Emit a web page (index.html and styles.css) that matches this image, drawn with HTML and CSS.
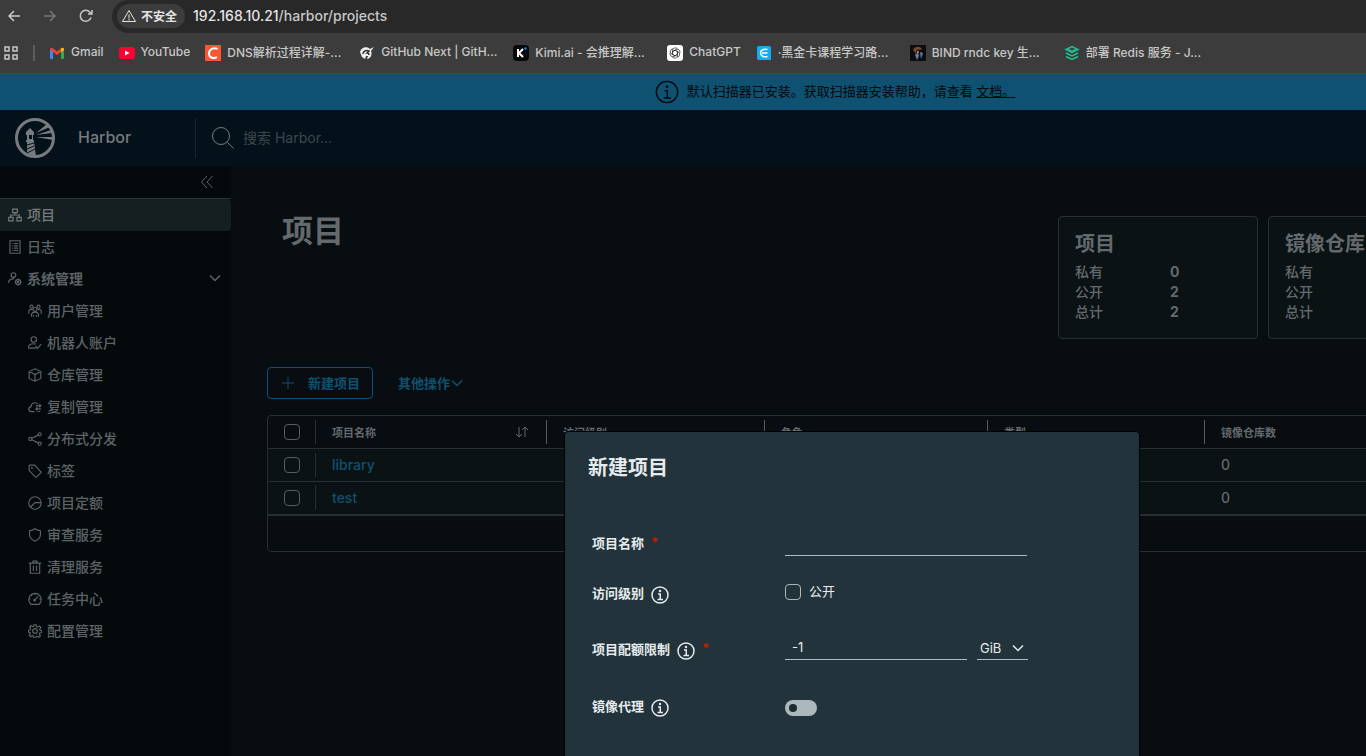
FILE: index.html
```html
<!DOCTYPE html>
<html lang="zh-CN">
<head>
    <meta charset="UTF-8">
    <meta name="viewport" content="width=device-width, initial-scale=1.0">
    <title>Harbor</title>
    <link rel="stylesheet" href="styles.css">
</head>
<body>
    <svg class="sprite" aria-hidden="true">
        <symbol id="i-info" viewBox="0 0 36 36"><circle cx="18" cy="18" r="16"/><circle cx="18" cy="10" r="1" fill="currentColor"/><path d="M14 16h4.500v11M13 27h11"/></symbol>
        <symbol id="i-chevron" viewBox="0 0 14 14"><path d="M2 4.500l5 5 5-5"/></symbol>
        <symbol id="i-projects" viewBox="0 0 36 36"><path d="M12 3h12v9H12zM2 24h11v9H2zM23 24h11v9H23zM18 12v6M7 24v-6h22v6"/></symbol>
        <symbol id="i-logs" viewBox="0 0 36 36"><path d="M5 2h26v32H5zM10 9h2M10 15h2M10 21h2M10 27h2M15 9h11M15 15h11M15 21h11M15 27h11"/></symbol>
        <symbol id="i-admin" viewBox="0 0 36 36"><circle cx="14" cy="8" r="6"/><path d="M2 28v-5c3-5 8-6 14-6"/><circle cx="26" cy="26" r="6.500"/><circle cx="26" cy="26" r="2"/><path d="M26 17v3M26 32v3M17 26h3M32 26h3M20 20l2 2M30 30l2 2M32 20l-2 2M22 30l-2 2"/></symbol>
        <symbol id="i-users" viewBox="0 0 36 36"><circle cx="18" cy="14" r="5"/><circle cx="9" cy="7" r="4"/><circle cx="27" cy="7" r="4"/><path d="M9 33v-7c2-4 5-5 9-5s7 1 9 5v7M14 33v-5M22 33v-5M2 25v-8c2-3 5-4 9-3M34 25v-8c-2-3-5-4-9-3"/></symbol>
        <symbol id="i-robot" viewBox="0 0 36 36"><circle cx="15" cy="9" r="7"/><path d="M20 31H2v-6c5-6 11-6 18-4M19 26l5 6 10-11"/></symbol>
        <symbol id="i-cube" viewBox="0 0 36 36"><path d="M18 2l15 7v18l-15 7-15-7V9zM3 9l15 8 15-8M18 17v17"/></symbol>
        <symbol id="i-cloud" viewBox="0 0 36 36"><path d="M17 30H9c-9 0-9-12-1-13C8 7 20 4 25 11M31 29c-2 1-4 1-6 1M20 15h13M29 11l4 4-4 4M33 23H20M24 19l-4 4 4 4"/></symbol>
        <symbol id="i-share" viewBox="0 0 36 36"><circle cx="6" cy="18" r="4"/><circle cx="30" cy="6" r="4"/><circle cx="30" cy="30" r="4"/><path d="M10 16l16-8M10 20l16 8"/></symbol>
        <symbol id="i-tag" viewBox="0 0 36 36"><path d="M3 5l2-2h12l16 17c1 1 1 2 0 3L22 33c-1 1-2 1-3 0L3 17z"/><circle cx="10" cy="10" r="1"/></symbol>
        <symbol id="i-quota" viewBox="0 0 36 36"><circle cx="18" cy="18" r="16"/><path d="M6 29l12-12h16"/></symbol>
        <symbol id="i-shield" viewBox="0 0 36 36"><path d="M18 2c4 3 9 5 14 5v11c0 7-6 12-14 16C10 30 4 25 4 18V7c5 0 10-2 14-5z"/></symbol>
        <symbol id="i-trash" viewBox="0 0 36 36"><path d="M2 8h32M6 8v26h24V8M13 8V3h10v5M14 14v14M22 14v14"/></symbol>
        <symbol id="i-gauge" viewBox="0 0 36 36"><path d="M8 32a16 16 0 1 1 20 0zM17 21l9-10M18 3v4M3 18h4M29 18h4M8 8l2 2"/><circle cx="17" cy="21" r="2"/></symbol>
        <symbol id="i-cog" viewBox="0 0 36 36"><path d="M15 2h6l1 5 3 1 4-3 4 4-3 5 1 2 4 1v5l-5 1-1 3 3 4-4 4-4-3-3 1-1 4h-5l-1-5-3-1-4 3-4-4 3-4-1-3-4-1v-5l5-1 1-3-3-4 4-4 4 3 3-1z"/><circle cx="18" cy="18" r="6"/></symbol>
    </svg>

    <!-- Browser bar -->
    <div class="browser">
        <div class="toolbar">
            <button class="nav-btn" aria-label="Back"><svg viewBox="0 0 16 16"><path d="M14 8H3M8 3L3 8l5 5"/></svg></button>
            <button class="nav-btn disabled" aria-label="Forward"><svg viewBox="0 0 16 16"><path d="M2 8h11M8 3l5 5-5 5"/></svg></button>
            <button class="nav-btn" aria-label="Reload"><svg viewBox="0 0 16 16"><path d="M13 9.500A5.500 5.500 0 1 1 12 4.200l1.500 1.500M14 2v4h-4"/></svg></button>
            <div class="address">
                <button class="insecure"><svg viewBox="0 0 16 16"><path d="M8 2.500L14.500 13.500h-13zM8 6.500v4M8 11v1.500"/></svg>不安全</button>
                <span class="url"><b>192.168.10.21</b>/harbor/projects</span>
            </div>
        </div>
        <nav class="bookmarks">
            <button class="apps" aria-label="Apps"><svg viewBox="0 0 16 16"><path d="M2 2h4v4H2zM10 2h4v4h-4zM2 10h4v4H2zM10 10h4v4h-4z"/></svg></button>
            <span class="divider"></span>
            <a href="#"><svg viewBox="0 0 16 16"><path fill="#4285f4" d="M1 4l3 2.500V14H2a1 1 0 0 1-1-1z"/><path fill="#34a853" d="M15 4l-3 2.500V14h2a1 1 0 0 0 1-1z"/><path fill="#ea4335" d="M1 4.500C1 2.500 3 2.500 4 3.300L8 6.500l4-3.200V7l-4 3-4-3z"/><path fill="#fbbc04" d="M12 3.300c1-.8 3-.8 3 1.200v.5l-3 2.300z"/></svg>Gmail</a>
            <a href="#"><svg viewBox="0 0 16 16"><rect y="2" width="16" height="12" rx="3" fill="#f03"/><path d="M6 5.500v5l4.500-2.500z" fill="#fff"/></svg>YouTube</a>
            <a href="#" class="long"><svg viewBox="0 0 16 16"><rect width="16" height="16" fill="#fc5531"/><path d="M12.500 4.200C9 2 4 4 4 8.500c0 4 4 5.500 8 3.700" fill="none" stroke="#fff" stroke-width="2"/></svg>DNS解析过程详解-...</a>
            <a href="#" class="long"><svg viewBox="0 0 16 16"><path d="M1 7c1-5 7-6 10-3l4-2-3 4c2 5-2 8-4 8l1-3H7l-1 3-3-2z" fill="#eee"/><path d="M4 9c0-3 3-4 6-3L8 8c2 0 2 1 2 2" fill="none" stroke="#333" stroke-width="1.500"/></svg>GitHub Next | GitH...</a>
            <a href="#" class="long"><svg viewBox="0 0 16 16"><rect width="16" height="16" rx="4" fill="#080808"/><path d="M5 4v8M10 4L6 8l4 4" fill="none" stroke="#fff" stroke-width="2"/><circle cx="12.500" cy="3.500" r="1.200" fill="#1783ff"/></svg>Kimi.ai - 会推理解...</a>
            <a href="#"><svg viewBox="0 0 16 16"><rect width="16" height="16" rx="3" fill="#fff"/><g fill="none" stroke="#333" stroke-width=".8"><path id="petal" d="M8 5.200l2.500 1.500v3.500c0 3-4 4-5 1.500"/><use href="#petal" transform="rotate(60 8 8)"/><use href="#petal" transform="rotate(120 8 8)"/><use href="#petal" transform="rotate(180 8 8)"/><use href="#petal" transform="rotate(240 8 8)"/><use href="#petal" transform="rotate(300 8 8)"/></g></svg>ChatGPT</a>
            <a href="#" class="long"><svg viewBox="0 0 16 16"><path d="M3 1h10a2 2 0 0 1 2 2v12H3a2 2 0 0 1-2-2V3a2 2 0 0 1 2-2z" fill="#12adee"/><path d="M11.500 4.500C8 3.500 4.500 5 4.500 8s3.500 4.500 7 3.500M6 8h5.500" fill="none" stroke="#fff" stroke-width="1.500"/></svg>·黑金卡课程学习路...</a>
            <a href="#" class="long"><svg viewBox="0 0 16 16"><rect width="16" height="16" fill="#0d0d10"/><path d="M3 5c2-4 7-4 9-1l-2 1c-3-1-4 1-4 4z" fill="#6a4a2d"/><path d="M5 10l3-3 1 4-2 4zM10 7l3 1-2 6z" fill="#657da5"/><circle cx="8" cy="7" r="1" fill="#d99a54"/></svg>BIND rndc key 生...</a>
            <a href="#" class="long"><svg viewBox="0 0 16 16"><g fill="none" stroke="#1ac293" stroke-width="1.500"><path d="M2 4.500L8 1.500l6 3-6 3z"/><path d="M4 4.500l4 2 4-2M2 8l6 3 6-3M2 11.500l6 3 6-3"/></g></svg>部署 Redis 服务 - J...</a>
        </nav>
    </div>

    <div class="app">
        <div class="banner">
            <svg class="icon"><use href="#i-info"/></svg>
            <span>默认扫描器已安装。获取扫描器安装帮助，请查看 <a href="#">文档。</a></span>
        </div>

        <header class="header">
            <a href="#" class="brand">
                <svg viewBox="0 0 42 42">
                    <circle cx="21" cy="21" r="18.500" fill="none" stroke="currentColor" stroke-width="3"/>
                    <path d="M12 15l4-4 4 4v3h-1v5h1v2l2 14-9-2V25h-1v-2h1v-5h-1zM15 18v4h3v-4z" fill="currentColor" fill-rule="evenodd"/>
                    <path d="M22 16l11-9 3 3zM22 18l15-5 1 3zM22 20l17 0 0 3z" fill="currentColor"/>
                    <path d="M13 28l7-2M13 32l7-3M13 36l8-4" stroke="#03111b" stroke-width="1"/>
                </svg>
                <span>Harbor</span>
            </a>
            <label class="search">
                <svg viewBox="0 0 24 24"><circle cx="10" cy="10" r="8.500"/><path d="M16.500 16.500l6 6"/></svg>
                <input type="search" placeholder="搜索 Harbor..." aria-label="搜索 Harbor">
            </label>
        </header>

        <div class="main">
            <aside class="sidebar">
                <button class="collapse" aria-label="收起"><svg viewBox="0 0 14 14"><path d="M7 1L1.500 7 7 13M12.500 1L7 7l5.500 6"/></svg></button>
                <nav>
                    <a href="#" class="item active"><svg class="icon"><use href="#i-projects"/></svg>项目</a>
                    <a href="#" class="item"><svg class="icon"><use href="#i-logs"/></svg>日志</a>
                    <button class="item group"><svg class="icon"><use href="#i-admin"/></svg>系统管理<svg class="chevron"><use href="#i-chevron"/></svg></button>
                    <a href="#" class="item sub"><svg class="icon"><use href="#i-users"/></svg>用户管理</a>
                    <a href="#" class="item sub"><svg class="icon"><use href="#i-robot"/></svg>机器人账户</a>
                    <a href="#" class="item sub"><svg class="icon"><use href="#i-cube"/></svg>仓库管理</a>
                    <a href="#" class="item sub"><svg class="icon"><use href="#i-cloud"/></svg>复制管理</a>
                    <a href="#" class="item sub"><svg class="icon"><use href="#i-share"/></svg>分布式分发</a>
                    <a href="#" class="item sub"><svg class="icon"><use href="#i-tag"/></svg>标签</a>
                    <a href="#" class="item sub"><svg class="icon"><use href="#i-quota"/></svg>项目定额</a>
                    <a href="#" class="item sub"><svg class="icon"><use href="#i-shield"/></svg>审查服务</a>
                    <a href="#" class="item sub"><svg class="icon"><use href="#i-trash"/></svg>清理服务</a>
                    <a href="#" class="item sub"><svg class="icon"><use href="#i-gauge"/></svg>任务中心</a>
                    <a href="#" class="item sub"><svg class="icon"><use href="#i-cog"/></svg>配置管理</a>
                </nav>
            </aside>

            <main class="content">
                <div class="top">
                    <h1>项目</h1>
                    <div class="cards">
                        <section class="card">
                            <h2>项目</h2>
                            <dl><dt>私有</dt><dd>0</dd><dt>公开</dt><dd>2</dd><dt>总计</dt><dd>2</dd></dl>
                        </section>
                        <section class="card">
                            <h2>镜像仓库</h2>
                            <dl><dt>私有</dt><dd></dd><dt>公开</dt><dd></dd><dt>总计</dt><dd></dd></dl>
                        </section>
                    </div>
                </div>

                <div class="actions">
                    <button class="btn outline"><svg viewBox="0 0 14 14"><path d="M7 1v12M1 7h12"/></svg>新建项目</button>
                    <button class="btn">其他操作<svg class="chevron"><use href="#i-chevron"/></svg></button>
                </div>

                <div class="datagrid">
                    <table>
                        <colgroup><col class="c-check"><col class="c-name"><col class="c-access"><col class="c-role"><col class="c-type"><col></colgroup>
                        <thead>
                            <tr>
                                <th><input type="checkbox" class="check" aria-label="全选"></th>
                                <th><div class="cell dim">项目名称<svg class="sort" viewBox="0 0 14 12"><path d="M4 1v10M1 8l3 3 3-3M10 11V1M7 4l3-3 3 3"/></svg></div></th>
                                <th><div class="cell">访问级别</div></th>
                                <th><div class="cell">角色</div></th>
                                <th><div class="cell">类型</div></th>
                                <th><div class="cell">镜像仓库数</div></th>
                            </tr>
                        </thead>
                        <tbody>
                            <tr>
                                <td><input type="checkbox" class="check" aria-label="library"></td>
                                <td><div class="cell dim"><a href="#">library</a></div></td>
                                <td></td><td></td><td></td>
                                <td><div class="cell plain">0</div></td>
                            </tr>
                            <tr>
                                <td><input type="checkbox" class="check" aria-label="test"></td>
                                <td><div class="cell dim"><a href="#">test</a></div></td>
                                <td></td><td></td><td></td>
                                <td><div class="cell plain">0</div></td>
                            </tr>
                        </tbody>
                    </table>
                    <div class="datagrid-footer"></div>
                </div>
            </main>
        </div>

        <!-- New project dialog -->
        <div class="modal" role="dialog" aria-labelledby="modal-title">
            <h3 id="modal-title">新建项目</h3>
            <form>
                <div class="form-row first">
                    <label for="name">项目名称<span class="required">*</span></label>
                    <input type="text" id="name" class="text wide">
                </div>
                <div class="form-row">
                    <label for="public">访问级别<svg class="icon"><use href="#i-info"/></svg></label>
                    <input type="checkbox" id="public" class="check">
                    <label for="public" class="option">公开</label>
                </div>
                <div class="form-row">
                    <label for="quota">项目配额限制<svg class="icon"><use href="#i-info"/></svg><span class="required">*</span></label>
                    <input type="text" id="quota" class="text" value="-1">
                    <div class="select">
                        <select aria-label="单位"><option>GiB</option></select>
                        <svg class="chevron"><use href="#i-chevron"/></svg>
                    </div>
                </div>
                <div class="form-row last">
                    <label for="proxy">镜像代理<svg class="icon"><use href="#i-info"/></svg></label>
                    <input type="checkbox" id="proxy" class="switch" role="switch">
                </div>
            </form>
        </div>
    </div>
</body>
</html>
```

FILE: styles.css
```css
* {
    box-sizing: border-box;
}
body {
    margin: 0;
    height: 100vh;
    overflow: hidden;
    display: flex;
    flex-direction: column;
    background-color: #070d10;
    color: #63696c;
    font-family: Inter, "Noto Sans CJK SC", sans-serif;
    font-size: 14px;
}
button, input, select {
    font-family: inherit;
    color: inherit;
    background: none;
    border: none;
    padding: 0;
    margin: 0;
}
a {
    color: inherit;
    text-decoration: none;
}
h1, h2, h3, dl, dd {
    margin: 0;
}
svg {
    flex: none;
    fill: none;
    stroke: currentColor;
}
.sprite {
    display: none;
}
.icon {
    stroke-width: 2;
}
.chevron {
    width: 14px;
    height: 14px;
    stroke-width: 1.5;
}

/* Browser bar */
.browser {
    flex: none;
    background-color: #3c3c3c;
    border-bottom: 1px solid #4a4744;
    color: #c7c7c7;
}
.toolbar {
    display: flex;
    align-items: center;
    height: 33px;
    padding: 0 0 2px 6px;
}
.nav-btn {
    width: 16px;
    height: 16px;
    margin-right: 20px;
}
.nav-btn svg {
    display: block;
    width: 16px;
    height: 16px;
    stroke-width: 1.5;
}
.nav-btn.disabled {
    color: #777;
}
.address {
    flex: 1;
    display: flex;
    align-items: center;
    height: 33px;
    margin: 2px 0 0 -2px;
    padding: 0 0 2px 5px;
    background-color: #282828;
    border-radius: 17px 0 0 17px;
}
.insecure {
    display: flex;
    align-items: center;
    gap: 4px;
    height: 24px;
    padding: 0 8px 0 4px;
    border-radius: 12px;
    background-color: #3c3c3c;
    color: #e3e3e3;
    font-size: 12px;
    font-weight: 700;
}
.insecure svg {
    width: 16px;
    height: 16px;
}
.url {
    margin-left: 8px;
    font-weight: 500;
}
.url b {
    color: #e3e3e3;
    font-weight: 500;
}
.bookmarks {
    display: flex;
    align-items: center;
    height: 39px;
    margin-bottom: 1px;
    padding-left: 3px;
    font-size: 12px;
    font-weight: 500;
}
.apps, .apps svg {
    display: block;
    width: 16px;
    height: 16px;
    stroke-width: 1.5;
}
.divider {
    width: 2px;
    height: 16px;
    margin: 0 14px;
    background-color: #5c5c5c;
}
.bookmarks a {
    display: flex;
    align-items: center;
    gap: 6px;
    margin-right: 15px;
    padding-bottom: 2px;
    white-space: nowrap;
}
.bookmarks a svg {
    width: 16px;
    height: 16px;
    margin-top: 2px;
    stroke: none;
}
.bookmarks .long {
    width: 139px;
}

/* Harbor */
.app {
    flex: 1;
    position: relative;
    display: flex;
    flex-direction: column;
    width: calc(100% + 338px);
    min-height: 0;
}
.banner {
    display: flex;
    align-items: center;
    justify-content: center;
    gap: 8px;
    height: 36px;
    padding-right: 34px;
    background-color: #0f5170;
    color: #02080b;
    font-size: 13px;
}
.banner span {
    padding-bottom: 3px;
}
.banner .icon {
    width: 24px;
    height: 24px;
}
.banner a {
    text-decoration: underline;
}
.header {
    display: flex;
    align-items: center;
    height: 56px;
    background-color: #03111b;
    color: #777b7f;
}
.brand {
    display: flex;
    align-items: center;
    gap: 22px;
    width: 196px;
    height: 40px;
    padding-left: 14px;
    border-right: 1px solid #17242d;
    font-size: 16px;
    font-weight: 500;
}
.brand span {
    padding-bottom: 2px;
}
.brand svg {
    width: 42px;
    height: 42px;
    stroke: none;
}
.search {
    display: flex;
    align-items: center;
    gap: 8px;
    margin-left: 15px;
}
.search svg {
    width: 24px;
    height: 24px;
}
.search input {
    width: 200px;
    padding-bottom: 2px;
    font-size: 14px;
    outline: none;
}
.search input::placeholder {
    color: #3d474d;
}
.main {
    flex: 1;
    display: flex;
    min-height: 0;
}
.sidebar {
    flex: none;
    width: 231px;
    background-color: #04090c;
    color: #5d6366;
}
.collapse {
    display: flex;
    align-items: center;
    justify-content: flex-end;
    width: 100%;
    height: 33px;
    padding-right: 17px;
    border-bottom: 1px solid #2b3437;
}
.collapse svg {
    width: 14px;
    height: 14px;
}
.item {
    display: flex;
    align-items: center;
    gap: 5px;
    width: 100%;
    height: 32px;
    padding: 0 9px 2px 8px;
    font-size: 14px;
    font-weight: 500;
    text-align: left;
}
.item.active {
    background-color: #151e21;
    border-radius: 0 4px 4px 0;
    color: #767b7d;
}
.item.group {
    font-weight: 700;
}
.item.group .chevron {
    margin-left: auto;
}
.item.sub {
    padding-left: 28px;
}
.item .icon {
    width: 14px;
    height: 14px;
    margin-top: 2px;
    stroke-width: 3;
}
.content {
    flex: 1;
    padding: 50px 26px 0 36px;
}
.top {
    display: flex;
    justify-content: space-between;
    height: 151px;
}
.top h1 {
    padding-left: 15px;
    font-size: 31px;
    font-weight: 700;
    line-height: 30px;
}
.cards {
    display: grid;
    grid-template-columns: repeat(3, 200px);
    gap: 10px;
    align-items: start;
}
.card {
    padding: 13px 16px 16px;
    background-color: #0a1214;
    border: 1px solid #282f32;
    border-radius: 4px;
}
.card h2 {
    margin-bottom: 4px;
    font-size: 20px;
    font-weight: 700;
    line-height: 28px;
}
.card dl {
    display: grid;
    grid-template-columns: 95px 1fr;
    font-weight: 500;
    line-height: 20px;
}
.card dd {
    font-weight: 700;
}
.actions {
    display: flex;
    gap: 15px;
    margin-bottom: 16px;
}
.btn {
    display: flex;
    align-items: center;
    height: 32px;
    padding: 0 9px 2px;
    color: #0f5170;
    font-size: 13px;
    font-weight: 700;
    border: 1px solid transparent;
    border-radius: 4px;
}
.btn.outline {
    gap: 13px;
    padding: 0 12px 2px 13px;
    border-color: #0f5170;
}
.btn svg {
    width: 14px;
    height: 14px;
    margin-top: 2px;
}
.datagrid {
    border: 1px solid #282f32;
    border-radius: 4px;
}
.datagrid table {
    width: 100%;
    table-layout: fixed;
    border-collapse: separate;
    border-spacing: 0;
}
.c-check {
    width: 47px;
}
.c-name {
    width: 231px;
}
.c-access {
    width: 218px;
}
.c-role {
    width: 223px;
}
.c-type {
    width: 217px;
}
.datagrid th, .datagrid td {
    height: 33px;
    padding: 0;
    border-bottom: 1px solid #282f32;
    text-align: left;
}
.datagrid td {
    background-color: #0a1214;
}
.datagrid tbody tr:last-child td {
    height: 34px;
    border-bottom-width: 2px;
}
.datagrid th {
    font-size: 11px;
    font-weight: 700;
}
.datagrid .check {
    display: block;
    margin-left: 16px;
}
.cell {
    display: flex;
    align-items: center;
    justify-content: space-between;
    height: 24px;
    padding: 0 17px 0 16px;
    border-left: 1px solid #565c5f;
}
.datagrid td .cell {
    padding-bottom: 2px;
    font-weight: 500;
}
.cell.dim {
    border-color: #282f32;
}
.cell.plain {
    border-color: transparent;
}
.cell a {
    color: #0f5170;
}
.sort {
    width: 14px;
    height: 12px;
}
.datagrid-footer {
    height: 35px;
}

/* Form controls */
.check {
    appearance: none;
    width: 16px;
    height: 16px;
    border: 1px solid #565c5f;
    border-radius: 4px;
}
.switch {
    appearance: none;
    display: flex;
    align-items: center;
    width: 32px;
    height: 16px;
    padding-left: 4px;
    border-radius: 8px;
    background-color: #adb8bd;
}
.switch::before {
    content: "";
    width: 8px;
    height: 8px;
    border-radius: 50%;
    background-color: #1b2b32;
}

/* Modal */
.modal {
    position: absolute;
    top: 357px;
    bottom: -24px;
    left: 50%;
    width: 576px;
    margin-left: -288px;
    padding: 24px 23px;
    background-color: #22333b;
    border: 1px solid #000;
    border-radius: 4px;
    color: #e6ebed;
    font-size: 13px;
}
.modal h3 {
    font-size: 20px;
    font-weight: 700;
    line-height: 24px;
}
.modal form {
    padding: 44px 0 0 4px;
}
.form-row {
    display: flex;
    align-items: center;
    height: 56px;
}
.form-row.first {
    height: 40px;
}
.form-row.last {
    height: 64px;
}
.form-row > label:first-child {
    display: flex;
    align-items: center;
    gap: 7px;
    width: 193px;
    font-weight: 700;
}
.form-row.first > label:first-child {
    padding-bottom: 4px;
}
.form-row.last > label:first-child {
    padding-bottom: 6px;
}
.form-row .icon {
    width: 18px;
    height: 18px;
    margin-top: 6px;
    stroke-width: 3;
}
.required {
    color: #c21d00;
}
.form-row .check {
    border-color: #adb8bd;
}
.option {
    margin-left: 8px;
    padding-bottom: 4px;
}
.text {
    width: 182px;
    height: 24px;
    padding: 0 7px 2px;
    border-bottom: 1px solid #adbbc4;
    font-size: 13px;
    outline: none;
}
.text.wide {
    width: 242px;
}
.select {
    display: flex;
    align-items: center;
    width: 51px;
    height: 24px;
    margin-left: 10px;
    padding: 0 3px;
    border-bottom: 1px solid #adbbc4;
}
.select select {
    flex: 1;
    min-width: 0;
    appearance: none;
    font-size: 13px;
}
```
